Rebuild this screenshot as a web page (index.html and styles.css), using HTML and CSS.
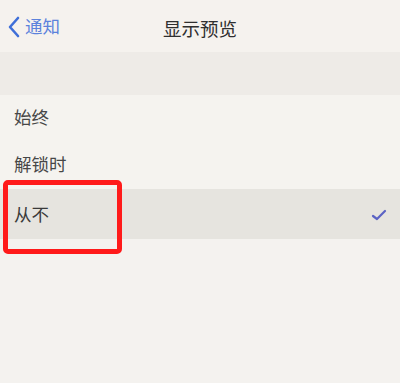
FILE: index.html
```html
<!DOCTYPE html>
<html lang="zh">
<head>
  <meta charset="UTF-8" />
  <title>显示预览</title>
  <link rel="stylesheet" href="styles.css">
</head>
<body>
  <div class="screen">
    <div class="nav-bar">
      <div class="nav-back">
        <svg class="chevron" width="14" height="22" viewBox="0 0 14 22">
          <path d="M11 2 L3 11 L11 20" fill="none" stroke="#3f6fd8" stroke-width="2.6" stroke-linecap="round" stroke-linejoin="round"/>
        </svg>
        <span>通知</span>
      </div>
      <div class="nav-title">显示预览</div>
    </div>

    <div class="section-gap"></div>

    <ul class="option-list">
      <li class="option">始终</li>
      <li class="option">解锁时</li>
      <li class="option selected">
        <span class="highlight-box"></span>
        从不
        <svg class="check" width="16" height="12" viewBox="0 0 16 12">
          <path d="M2 7 L6 10 L14 2" fill="none" stroke="#5b63c4" stroke-width="2.2" stroke-linecap="round" stroke-linejoin="round"/>
        </svg>
      </li>
    </ul>
  </div>
</body>
</html>
```

FILE: styles.css
```css
body {
  margin: 0;
  padding: 0;
  font-family: "Noto Sans CJK SC", "Noto Sans", sans-serif;
  background: #f4f2ef;
}

.screen {
  width: 400px;
  height: 383px;
  background: #f4f2ef;
  overflow: hidden;
}

.nav-bar {
  height: 52px;
  position: relative;
  display: flex;
  align-items: center;
  justify-content: center;
  background: #f5f2ee;
}

.nav-back {
  position: absolute;
  left: 7px;
  top: 15px;
  display: flex;
  align-items: center;
  gap: 4px;
  color: #5c82dc;
  font-size: 17.5px;
}

.nav-back span {
  margin-top: -2px;
}

.nav-title {
  font-size: 18.5px;
  color: #2f2f2f;
  margin-top: 4px;
}

.section-gap {
  height: 43px;
  background: #eeebe7;
}

.option-list {
  list-style: none;
  margin: 0;
  padding: 0;
}

.option {
  height: 47px;
  box-sizing: border-box;
  padding-bottom: 5px;
  display: flex;
  align-items: center;
  padding-left: 14px;
  font-size: 17.5px;
  color: #474747;
  background: #f5f3ef;
  position: relative;
}

.option.selected {
  height: 50px;
  padding-bottom: 2px;
  background: #e6e4df;
  color: #3a3a3a;
}

.check {
  margin-left: auto;
  margin-right: 13px;
  margin-top: 4px;
}

.highlight-box {
  position: absolute;
  left: 3px;
  top: -9px;
  width: 109px;
  height: 64px;
  border: 5px solid #ff1a1a;
  border-radius: 5px;
}
```
